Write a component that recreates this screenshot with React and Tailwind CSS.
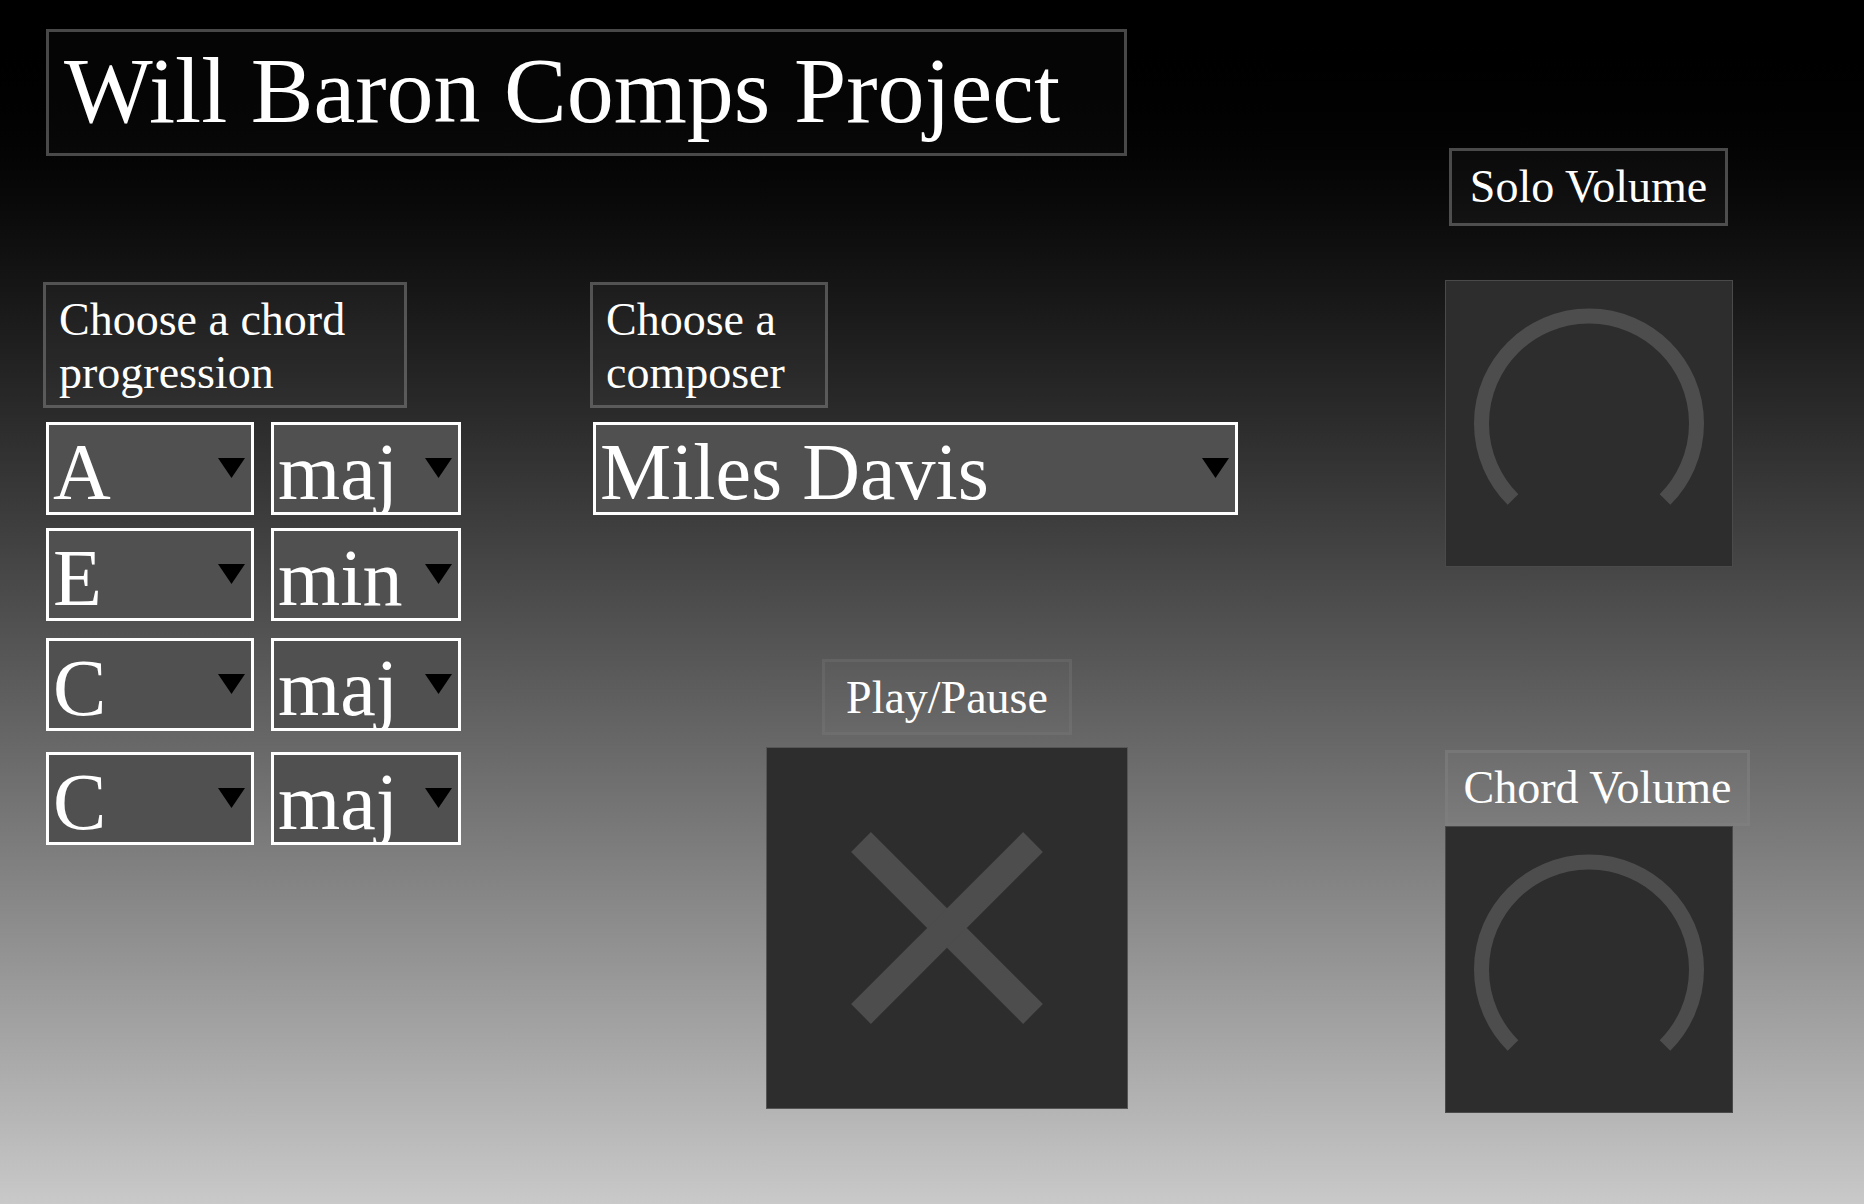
import { useState } from 'react';

const NOTES = ['A', 'A#', 'B', 'C', 'C#', 'D', 'D#', 'E', 'F', 'F#', 'G', 'G#'];
const QUALITIES = ['maj', 'min', 'dom', 'dim'];
const COMPOSERS = ['Miles Davis', 'John Coltrane', 'Bill Evans', 'Thelonious Monk'];

const Caret = () => (
  <svg
    className="pointer-events-none absolute right-[9px] top-[36px] w-[27px] h-[20px]"
    viewBox="0 0 27 20"
  >
    <polygon points="0,0 27,0 13.5,20" fill="#000" />
  </svg>
);

const Dropdown = ({ value, onChange, options, width }) => (
  <div className={`relative h-[93px] ${width}`}>
    <select
      value={value}
      onChange={(e) => onChange(e.target.value)}
      className="appearance-none block w-full h-full py-0 bg-[#505050] border-[3px] border-white rounded-none outline-none text-white text-[80px] leading-[94px] pl-[4px] pr-[40px] font-['Liberation_Serif',serif]"
    >
      {options.map((o) => (
        <option key={o} value={o}>{o}</option>
      ))}
    </select>
    <Caret />
  </div>
);

const Label = ({ children, className = '' }) => (
  <div
    className={`border-[3px] border-[rgba(128,128,128,0.55)] bg-white/[0.03] text-[46px] leading-[53px] text-white ${className}`}
  >
    {children}
  </div>
);

const Knob = () => (
  <div className="w-[288px] h-[287px] bg-[#2d2d2d] border border-[#4a4a4a] flex items-center justify-center">
    <svg width="286" height="285" viewBox="0 0 286 285">
      <path
        d="M 67 218.5 A 107.5 107.5 0 1 1 219 218.5"
        fill="none"
        stroke="#4d4d4d"
        strokeWidth="15"
        strokeLinecap="butt"
      />
    </svg>
  </div>
);

const App = () => {
  const [chords, setChords] = useState([
    ['A', 'maj'],
    ['E', 'min'],
    ['C', 'maj'],
    ['C', 'maj'],
  ]);
  const [composer, setComposer] = useState('Miles Davis');

  const setChord = (i, j, v) => {
    const next = chords.map((c) => [...c]);
    next[i][j] = v;
    setChords(next);
  };

  const rowGaps = ['mt-0', 'mt-[13px]', 'mt-[17px]', 'mt-[21px]'];

  return (
    <div className="h-[1204px] w-full bg-linear-to-b from-black to-[#c9c9c9] flex font-['Liberation_Serif',serif] text-white overflow-hidden">
      {/* Left side */}
      <div className="w-[1445px] shrink-0 flex flex-col">
        {/* Title */}
        <div className="ml-[46px] mt-[29px] w-[1081px] h-[127px] border-[3px] border-[rgba(128,128,128,0.55)] bg-white/[0.02] pl-[15px] pt-[11px] text-[94px] leading-none whitespace-nowrap">
          Will Baron Comps Project
        </div>

        <div className="ml-[43px] mt-[126px] flex">
          {/* Chord progression */}
          <div className="w-[547px] shrink-0 flex flex-col items-start">
            <Label className="w-[364px] h-[126px] pl-[13px] pt-[8px]">
              Choose a chord progression
            </Label>
            <div className="ml-[3px] mt-[14px]">
              {chords.map((c, i) => (
                <div key={i} className={`flex gap-[17px] ${rowGaps[i]}`}>
                  <Dropdown
                    value={c[0]}
                    onChange={(v) => setChord(i, 0, v)}
                    options={NOTES}
                    width="w-[208px]"
                  />
                  <Dropdown
                    value={c[1]}
                    onChange={(v) => setChord(i, 1, v)}
                    options={QUALITIES}
                    width="w-[190px]"
                  />
                </div>
              ))}
            </div>
          </div>

          {/* Composer + play */}
          <div className="w-[714px] shrink-0 flex flex-col">
            <Label className="w-[238px] h-[126px] pl-[13px] pt-[8px]">
              Choose a composer
            </Label>
            <div className="ml-[3px] mt-[14px]">
              <Dropdown
                value={composer}
                onChange={setComposer}
                options={COMPOSERS}
                width="w-[645px]"
              />
            </div>

            <div className="mt-[144px] flex flex-col items-center">
              <div className="w-[250px] h-[76px] pt-[9px] text-center border-[3px] border-[rgba(128,128,128,0.25)] bg-white/[0.02] text-[46px] leading-[53px] text-white">
                Play/Pause
              </div>
              <button className="mt-[12px] w-[362px] h-[362px] bg-[#2d2d2d] border border-[#555] flex items-center justify-center">
                <svg width="360" height="360" viewBox="0 0 360 360">
                  <g stroke="#4d4d4d" strokeWidth="28" strokeLinecap="butt">
                    <line x1="94" y1="94" x2="266" y2="266" />
                    <line x1="266" y1="94" x2="94" y2="266" />
                  </g>
                </svg>
              </button>
            </div>
          </div>
        </div>
      </div>

      {/* Volume column */}
      <div className="flex flex-col items-start">
        <Label className="ml-[4px] mt-[148px] w-[279px] h-[78px] pt-[9px] text-center">
          Solo Volume
        </Label>
        <div className="mt-[54px]">
          <Knob />
        </div>
        <Label className="mt-[183px] w-[305px] h-[76px] pt-[8px] text-center">
          Chord Volume
        </Label>
        <Knob />
      </div>
    </div>
  );
};

export default App;
